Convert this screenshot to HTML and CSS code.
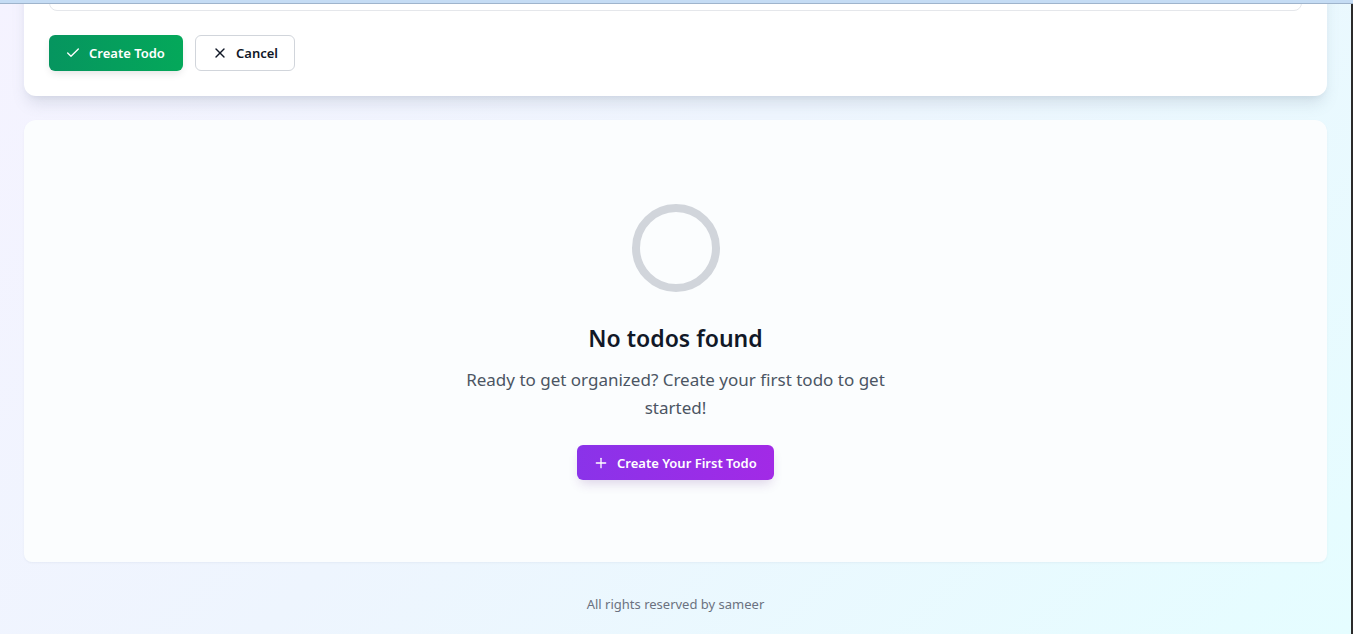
FILE: index.html
```html
<!DOCTYPE html>
<html lang="en">
<head>
<meta charset="utf-8">
<title>Todos</title>
<link rel="stylesheet" href="styles.css">
</head>
<body>
<div class="topbar"></div>
<div class="scrollbar"></div>
<div class="page">
  <main class="main">
    <section class="card form-card">
      <input class="input" type="text" value="">
      <div class="actions">
        <button class="btn btn-green">
          <svg class="ico" viewBox="0 0 24 24" fill="none" stroke="currentColor" stroke-width="2" stroke-linecap="round" stroke-linejoin="round"><path d="M20 6 9 17l-5-5"/></svg>
          <span>Create Todo</span>
        </button>
        <button class="btn btn-outline">
          <svg class="ico" viewBox="0 0 24 24" fill="none" stroke="currentColor" stroke-width="2" stroke-linecap="round" stroke-linejoin="round"><path d="M18 6 6 18"/><path d="m6 6 12 12"/></svg>
          <span>Cancel</span>
        </button>
      </div>
    </section>

    <section class="card empty-card">
      <svg class="empty-icon" viewBox="0 0 24 24" fill="none" stroke="currentColor" stroke-width="2"><circle cx="12" cy="12" r="10"/></svg>
      <h2 class="empty-title">No todos found</h2>
      <p class="empty-text">Ready to get organized? Create your first todo to get started!</p>
      <button class="btn btn-purple">
        <svg class="ico" viewBox="0 0 24 24" fill="none" stroke="currentColor" stroke-width="2" stroke-linecap="round" stroke-linejoin="round"><path d="M5 12h14"/><path d="M12 5v14"/></svg>
        <span>Create Your First Todo</span>
      </button>
    </section>
  </main>
  <footer class="footer">All rights reserved by sameer</footer>
</div>
</body>
</html>
```
FILE: styles.css
```css
* { box-sizing: border-box; }
html, body { margin: 0; padding: 0; }
body {
  font-family: "Noto Sans", "Open Sans", sans-serif;
  background: linear-gradient(135deg, #f5f3ff 0%, #eef5fe 45%, #e5fdff 100%);
  min-height: 634px;
  overflow: hidden;
}
.topbar {
  position: fixed;
  top: 0; left: 0; right: 0;
  height: 4px;
  background: #c5dcf4;
  border-bottom: 1px solid #9fb4cc;
  z-index: 10;
}
.scrollbar {
  position: fixed;
  top: 4px; right: 0; bottom: 0;
  width: 2px;
  background: #2b2b2b;
  z-index: 10;
}
.page {
  width: calc(100% - 2px);
  padding: 0 24px;
}
.main {
  display: flex;
  flex-direction: column;
  gap: 24px;
  margin-top: -55px;
}
.card {
  border-radius: 12px;
}
.form-card {
  background: #ffffff;
  padding: 24px 25px 25px;
  box-shadow: 0 10px 15px -3px rgba(100, 116, 139, 0.18), 0 4px 6px -4px rgba(100, 116, 139, 0.14);
  display: flex;
  flex-direction: column;
  gap: 24px;
}
.input {
  height: 42px;
  width: 100%;
  border: 1px solid #e5e7eb;
  border-radius: 8px;
  background: #fff;
}
.actions {
  display: flex;
  gap: 12px;
}
.btn {
  display: inline-flex;
  align-items: center;
  gap: 8px;
  height: 36px;
  padding: 0 16px;
  border-radius: 6px;
  font-family: inherit;
  font-size: 13px;
  font-weight: 600;
  border: none;
  cursor: pointer;
  white-space: nowrap;
}
.ico { width: 16px; height: 16px; flex: none; }
.btn-green {
  background: linear-gradient(90deg, #06955f, #04a85a);
  color: #fff;
  width: 134px;
  box-shadow: 0 4px 8px -2px rgba(0, 0, 0, 0.12);
}
.btn-outline {
  background: #fff;
  color: #111827;
  border: 1px solid #d1d5db;
  width: 100px;
}
.btn-purple {
  background: linear-gradient(90deg, #8a33e9, #a22ae6);
  color: #fff;
  height: 35px;
  width: 197px;
  box-shadow: 0 6px 12px -3px rgba(88, 28, 135, 0.2);
}
.empty-card {
  background: #fbfdfe;
  padding: 80px 24px 82px;
  display: flex;
  flex-direction: column;
  align-items: center;
  text-align: center;
  border-radius: 12px 12px 8px 8px;
  box-shadow: 0 1px 2px rgba(100, 116, 139, 0.08);
}
.empty-icon {
  width: 96px;
  height: 96px;
  color: #d1d5db;
  margin-bottom: 26px;
}
.empty-title {
  margin: 0 0 12px;
  font-size: 23px;
  line-height: 32px;
  font-weight: 600;
  color: #111827;
}
.empty-text {
  margin: 0 0 23px;
  max-width: 448px;
  font-size: 17px;
  line-height: 28px;
  color: #4b5563;
}
.footer {
  padding: 32px 0 20px;
  text-align: center;
  font-size: 13px;
  line-height: 20px;
  color: #6b7280;
}
```
